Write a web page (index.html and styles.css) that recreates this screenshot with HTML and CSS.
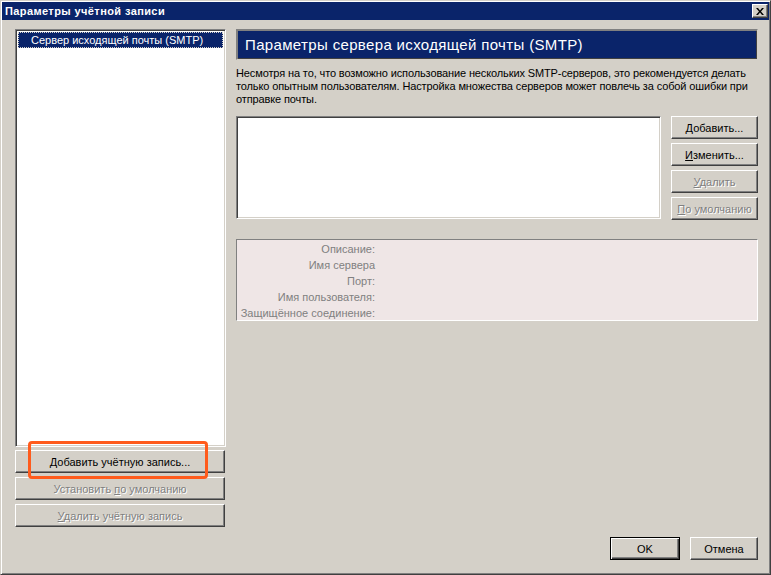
FILE: index.html
```html
<html>
<head>
<meta charset="utf-8">
<link rel="stylesheet" href="styles.css">
</head>
<body>
<div class="window">
  <div class="titlebar">
    <span class="title">Параметры учётной записи</span>
    <span class="close-btn">
      <svg width="8" height="7" viewBox="0 0 8 7"><path d="M0 0h2l2 2.5L6 0h2L5 3.5 8 7H6L4 4.5 2 7H0l3-3.5z" fill="#000"/></svg>
    </span>
  </div>
  <div class="content">
    <div class="main">
      <div class="left-col">
        <div class="account-list">
          <div class="account-item">Сервер исходящей почты (SMTP)</div>
        </div>
        <div class="left-buttons">
          <div class="btn wide"><span><u>Д</u>обавить учётную запись...</span></div>
          <div class="btn wide disabled"><span>Установить <u>п</u>о умолчанию</span></div>
          <div class="btn wide disabled"><span><u>У</u>далить учётную запись</span></div>
          <div class="highlight"></div>
        </div>
      </div>
      <div class="right-col">
        <div class="heading">Параметры сервера исходящей почты (SMTP)</div>
        <p class="desc">Несмотря на то, что возможно использование нескольких SMTP-серверов, это рекомендуется делать только опытным пользователям. Настройка множества серверов может повлечь за собой ошибки при отправке почты.</p>
        <div class="server-row">
          <div class="server-list"></div>
          <div class="server-buttons">
            <div class="btn"><span><u>Д</u>обавить...</span></div>
            <div class="btn"><span><u>И</u>зменить...</span></div>
            <div class="btn disabled"><span><u>У</u>далить</span></div>
            <div class="btn disabled"><span><u>П</u>о умолчанию</span></div>
          </div>
        </div>
        <div class="details">
          <div class="label">Описание:</div><div class="value"></div>
          <div class="label">Имя сервера</div><div class="value"></div>
          <div class="label">Порт:</div><div class="value"></div>
          <div class="label">Имя пользователя:</div><div class="value"></div>
          <div class="label">Защищённое соединение:</div><div class="value"></div>
        </div>
      </div>
    </div>
    <div class="footer">
      <div class="btn default"><span>OK</span></div>
      <div class="btn dialog"><span>Отмена</span></div>
    </div>
  </div>
</div>
</body>
</html>
```

FILE: styles.css
```css
* {
  box-sizing: border-box;
  margin: 0;
  padding: 0;
}

body {
  font-family: "Liberation Sans", Arial, sans-serif;
  font-size: 11px;
  color: #000;
  background: #d4d0c8;
}

.window {
  width: 771px;
  height: 575px;
  background: #d4d0c8;
  border: 1px solid;
  border-color: #d4d0c8 #404040 #404040 #d4d0c8;
  box-shadow: inset 1px 1px #fff, inset -1px -1px #808080;
  padding: 1px;
  display: flex;
  flex-direction: column;
}

.titlebar {
  height: 18px;
  background: #0a246a;
  color: #fff;
  display: flex;
  align-items: center;
  justify-content: space-between;
  padding: 0 1px 0 3px;
}

.title {
  font-weight: bold;
  font-size: 11px;
  letter-spacing: 0.4px;
}

.close-btn {
  width: 16px;
  height: 14px;
  background: #d4d0c8;
  border: 1px solid;
  border-color: #fff #404040 #404040 #fff;
  box-shadow: inset -1px -1px #808080;
  display: flex;
  align-items: center;
  justify-content: center;
}

.content {
  flex: 1;
  display: flex;
  flex-direction: column;
  padding: 9px 11px 13px 13px;
}

.main {
  flex: 1;
  display: flex;
  gap: 10px;
}

.left-col {
  width: 211px;
  display: flex;
  flex-direction: column;
}

.account-list {
  height: 418px;
  background: #fff;
  border: 1px solid;
  border-color: #808080 #fff #fff #808080;
  box-shadow: inset 1px 1px #404040, inset -1px -1px #d4d0c8;
  padding: 2px;
}

.account-item {
  height: 16px;
  line-height: 14px;
  background: #0a246a;
  color: #fff;
  border: 1px dotted #d4d0c8;
  padding-left: 12px;
}

.left-buttons {
  position: relative;
  display: flex;
  flex-direction: column;
  gap: 4px;
  margin-top: 3px;
}

.btn {
  height: 23px;
  background: #d4d0c8;
  border: 1px solid;
  border-color: #fff #404040 #404040 #fff;
  box-shadow: inset -1px -1px #808080;
  display: flex;
  align-items: center;
  justify-content: center;
  white-space: nowrap;
}

.btn u {
  text-decoration: underline;
  text-underline-offset: 1px;
}

.btn.wide {
  width: 210px;
}

.btn.disabled {
  color: #808080;
  text-shadow: 1px 1px #fff;
}

.highlight {
  position: absolute;
  left: 13px;
  top: -9px;
  width: 180px;
  height: 38px;
  border: 3px solid #ff5b1c;
  border-radius: 4px;
}

.right-col {
  width: 522px;
  display: flex;
  flex-direction: column;
}

.heading {
  height: 31px;
  background: #0a246a;
  color: #fff;
  font-size: 15px;
  letter-spacing: 0.35px;
  border: 1px solid;
  border-color: #808080 #d4d0c8 #d4d0c8 #808080;
  box-shadow: inset 1px 1px #808080, inset -1px -1px #404040;
  padding: 6px 0 0 8px;
}

.desc {
  margin-top: 7px;
  line-height: 13px;
  letter-spacing: -0.12px;
}

.server-row {
  display: flex;
  gap: 10px;
  margin-top: 10px;
}

.server-list {
  width: 425px;
  height: 103px;
  background: #fff;
  border: 1px solid;
  border-color: #808080 #fff #fff #808080;
  box-shadow: inset 1px 1px #404040, inset -1px -1px #d4d0c8;
}

.server-buttons {
  flex: 1;
  display: flex;
  flex-direction: column;
  gap: 4px;
}

.details {
  margin-top: 19px;
  height: 82px;
  background: #efe6e6;
  border: 1px solid;
  border-color: #808080 #fff #fff #808080;
  display: grid;
  grid-template-columns: 138px 1fr;
  grid-auto-rows: 16px;
  padding-top: 1px;
  color: #808080;
}

.label {
  text-align: right;
  line-height: 16px;
}

.footer {
  display: flex;
  justify-content: flex-end;
  gap: 10px;
}

.btn.dialog {
  width: 68px;
}

.btn.default {
  width: 70px;
  border: 1px solid #000;
  box-shadow: inset 1px 1px #fff, inset -1px -1px #404040, inset -2px -2px #808080;
}
```
